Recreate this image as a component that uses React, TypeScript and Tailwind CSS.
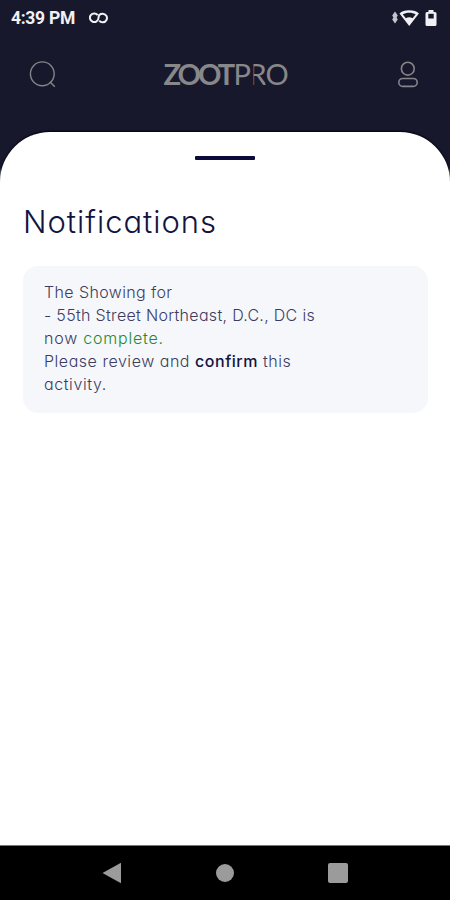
import React from "react";

const lineBase = "block w-fit whitespace-nowrap";

function StatusBar() {
  return (
    <div className="flex h-9 items-center justify-between pl-[11px] pr-[12px] text-[#f1f1f4]">
      <div className="flex items-center gap-[14px]">
        <span className="font-['Roboto',sans-serif] text-[17.5px] font-bold leading-9 tracking-[-0.3px]">4:39 PM</span>
        <svg className="h-3 w-[19px]" viewBox="0 0 19 12" fill="none" stroke="currentColor" strokeWidth="2">
          <path d="M8.700 3.200A4.300 4.300 0 1 0 9.500 6C9.500 3.500 11.200 1.700 13.700 1.700A4.300 4.300 0 1 1 10.200 8.600" />
        </svg>
      </div>
      <svg className="h-[18px] w-[46px]" viewBox="0 0 46 18">
        <path d="M3 2.500l2.800 4L4.600 8.500l1.200 2L3 14.500l-2.800-4 1.200-2-1.200-2z" fill="#c4c4cb" />
        <path d="M17.200 1.300c-4.200 0-7.600 1.200-9.700 3.200L17.200 17l9.700-12.500c-2.100-2-5.500-3.200-9.700-3.200z" fill="currentColor" />
        <path d="M10.700 5.200C14 3.100 20.400 3.100 23.700 5.200L20.600 9.300Q17.200 7.400 13.800 9.300z" fill="#18182d" />
        <path d="M35 3h1.500V1h5v2H43q1.500 0 1.500 1.500v11q0 1.500-1.500 1.500h-8q-1.500 0-1.500-1.500v-11Q33.500 3 35 3z" fill="currentColor" />
        <path d="M36.300 4.800h5.400v4.700h-5.400z" fill="#18182d" />
      </svg>
    </div>
  );
}

function Logo() {
  return (
    <div className="flex h-7 w-[126px] whitespace-nowrap font-['Lato',sans-serif] text-[29px] leading-[28px] text-[#88888a]">
      <span className="-ml-px w-[70px] font-bold tracking-[-3px]">ZOOT</span>
      <span className="w-[15px] font-normal tracking-[-2px]">P</span>
      <span className="w-[17px] font-normal tracking-[-1px] [clip-path:inset(0_0_0_5px)]">R</span>
      <span className="font-normal">O</span>
    </div>
  );
}

function Header() {
  return (
    <header className="flex h-[96px] items-start justify-between pl-[29px] pr-8 pt-6 text-[#85858b]">
      <svg className="h-7 w-7" viewBox="0 0 28 28" fill="none" stroke="currentColor" strokeWidth="1.400">
        <circle cx="13.300" cy="13.800" r="11.900" />
        <path d="M20.800 21.800l5 5" />
      </svg>
      <Logo />
      <svg className="h-7 w-5" viewBox="0 0 20 28" fill="none" stroke="currentColor" strokeWidth="1.600">
        <circle cx="9.800" cy="8.700" r="6.400" />
        <rect x="0.800" y="18.500" width="18.400" height="7.900" rx="3.950" />
      </svg>
    </header>
  );
}

export default function App() {
  return (
    <div className="flex h-[900px] w-[450px] flex-col overflow-hidden bg-white">
      <div className="h-[132px] shrink-0 bg-[#18182d]">
        <StatusBar />
        <Header />
      </div>
      <div className="flex-1 bg-[linear-gradient(#18182d_0_36px,#ffffff_48px)]">
        <main className="h-full rounded-t-[50px] bg-white px-[23px] pt-6 font-['Inter',sans-serif] [font-feature-settings:'cv11'] shadow-[0_-1px_2px_#000010]">
          <div className="mx-auto h-[4px] w-[60px] rounded-[1px] bg-[#0b0a3a]" />
          <h1 className="mt-[42px] w-fit whitespace-nowrap text-[31px] font-light leading-10 tracking-[0.970px] text-[#14133f]">Notifications</h1>
          <section className="mr-[-1px] mt-[24px] h-[147px] rounded-[15px] bg-[#f5f7fb] pl-[21px] pt-[15px] text-[16px] font-light leading-[23px] text-[#3c3c60]">
            <span className={`${lineBase} tracking-[0.380px]`}>The Showing for</span>
            <span className={`${lineBase} tracking-[0.310px]`}>- 55th Street Northeast, D.C., DC is</span>
            <span className={`${lineBase} tracking-[0.780px]`}>now <span className="text-[#1f8a2d]">complete.</span></span>
            <span className={`${lineBase} tracking-[0.530px]`}>Please review and <span className="font-medium text-[#14133f]">confirm</span> this</span>
            <span className={`${lineBase} tracking-[0.580px]`}>activity.</span>
          </section>
        </main>
      </div>
      <nav className="flex h-[55px] shrink-0 items-center justify-between border-t border-[#777] bg-black px-[102px] text-[#9b9b9b]">
        <svg className="h-[22px] w-5" viewBox="0 0 20 22"><path d="M.5 11L19 .8v20.400z" fill="currentColor" /></svg>
        <span className="h-[18px] w-[18px] rounded-full bg-[#9b9b9b]" />
        <span className="h-5 w-5 rounded-[2px] bg-[#9b9b9b]" />
      </nav>
    </div>
  );
}
